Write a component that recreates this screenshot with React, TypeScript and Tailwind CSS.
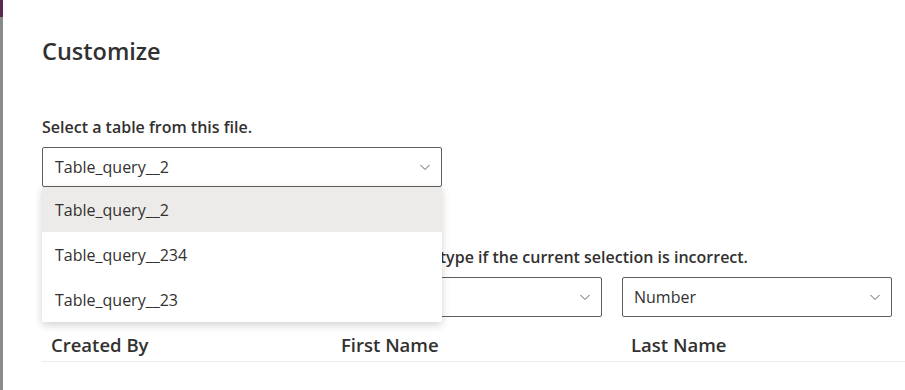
const columns = [
  { header: "Created By", type: "Text" },
  { header: "First Name", type: "Text" },
  { header: "Last Name", type: "Number" },
]

const tables = ["Table_query__2", "Table_query__234", "Table_query__23"]

const Chevron = () => (
  <svg width="12" height="12" viewBox="0 0 12 12" className="shrink-0">
    <path d="M1.5 4 L6 8.5 L10.5 4" fill="none" stroke="#605e5c" strokeWidth="1" />
  </svg>
)

export default function App() {
  return (
    <div className="w-[905px] h-[390px] overflow-hidden flex bg-white text-[#323130] font-['Open_Sans',sans-serif]">
      <div className="w-[3px] flex flex-col shrink-0">
        <div className="h-[17px] bg-[#5b2a4f]" />
        <div className="flex-1 bg-[#8a8a8a]" />
      </div>
      <div className="flex-1 pl-[39px] pt-[35px]">
        <h1 className="text-[23.5px] leading-[32px] font-semibold">Customize</h1>

        <p className="mt-[50px] text-[16px] leading-[20px] font-semibold">Select a table from this file.</p>
        <div className="relative mt-[10px] w-[400px] z-10">
          <div className="h-[40px] border border-[#605e5c] rounded-[2px] flex items-center justify-between pl-[12px] pr-[10px] text-[16px]">
            <span>Table_query__2</span>
            <Chevron />
          </div>
          <ul className="absolute left-0 top-full w-full bg-white rounded-b-[2px] shadow-[0_3px_8px_rgba(0,0,0,0.18)]">
            {tables.map((t, i) => (
              <li
                key={t}
                className={
                  i === 0
                    ? "h-[45px] flex items-center pl-[13px] text-[16px] bg-[#edebe9]"
                    : "h-[45px] flex items-center pl-[13px] text-[16px]"
                }
              >
                {t}
              </li>
            ))}
          </ul>
        </div>

        <p className="mt-[60px] text-[16px] leading-[20px] font-semibold whitespace-nowrap">
          Check each column below and pick a different data type if the current selection is incorrect.
        </p>
        <div className="mt-[10px] grid grid-cols-[290px_290px_290px]">
          {columns.map((c) => (
            <div key={c.header} className="pr-[20px]">
              <div className="h-[40px] border border-[#605e5c] rounded-[2px] flex items-center justify-between pl-[11px] pr-[10px] text-[16px]">
                <span>{c.type}</span>
                <Chevron />
              </div>
            </div>
          ))}
        </div>
        <div className="grid grid-cols-[290px_290px_290px] h-[45px] pt-[14px] border-b border-[#edebe9]">
          {columns.map((c) => (
            <div key={c.header} className="pl-[9px] text-[18.5px] leading-[28px] font-semibold">
              {c.header}
            </div>
          ))}
        </div>
      </div>
    </div>
  )
}
